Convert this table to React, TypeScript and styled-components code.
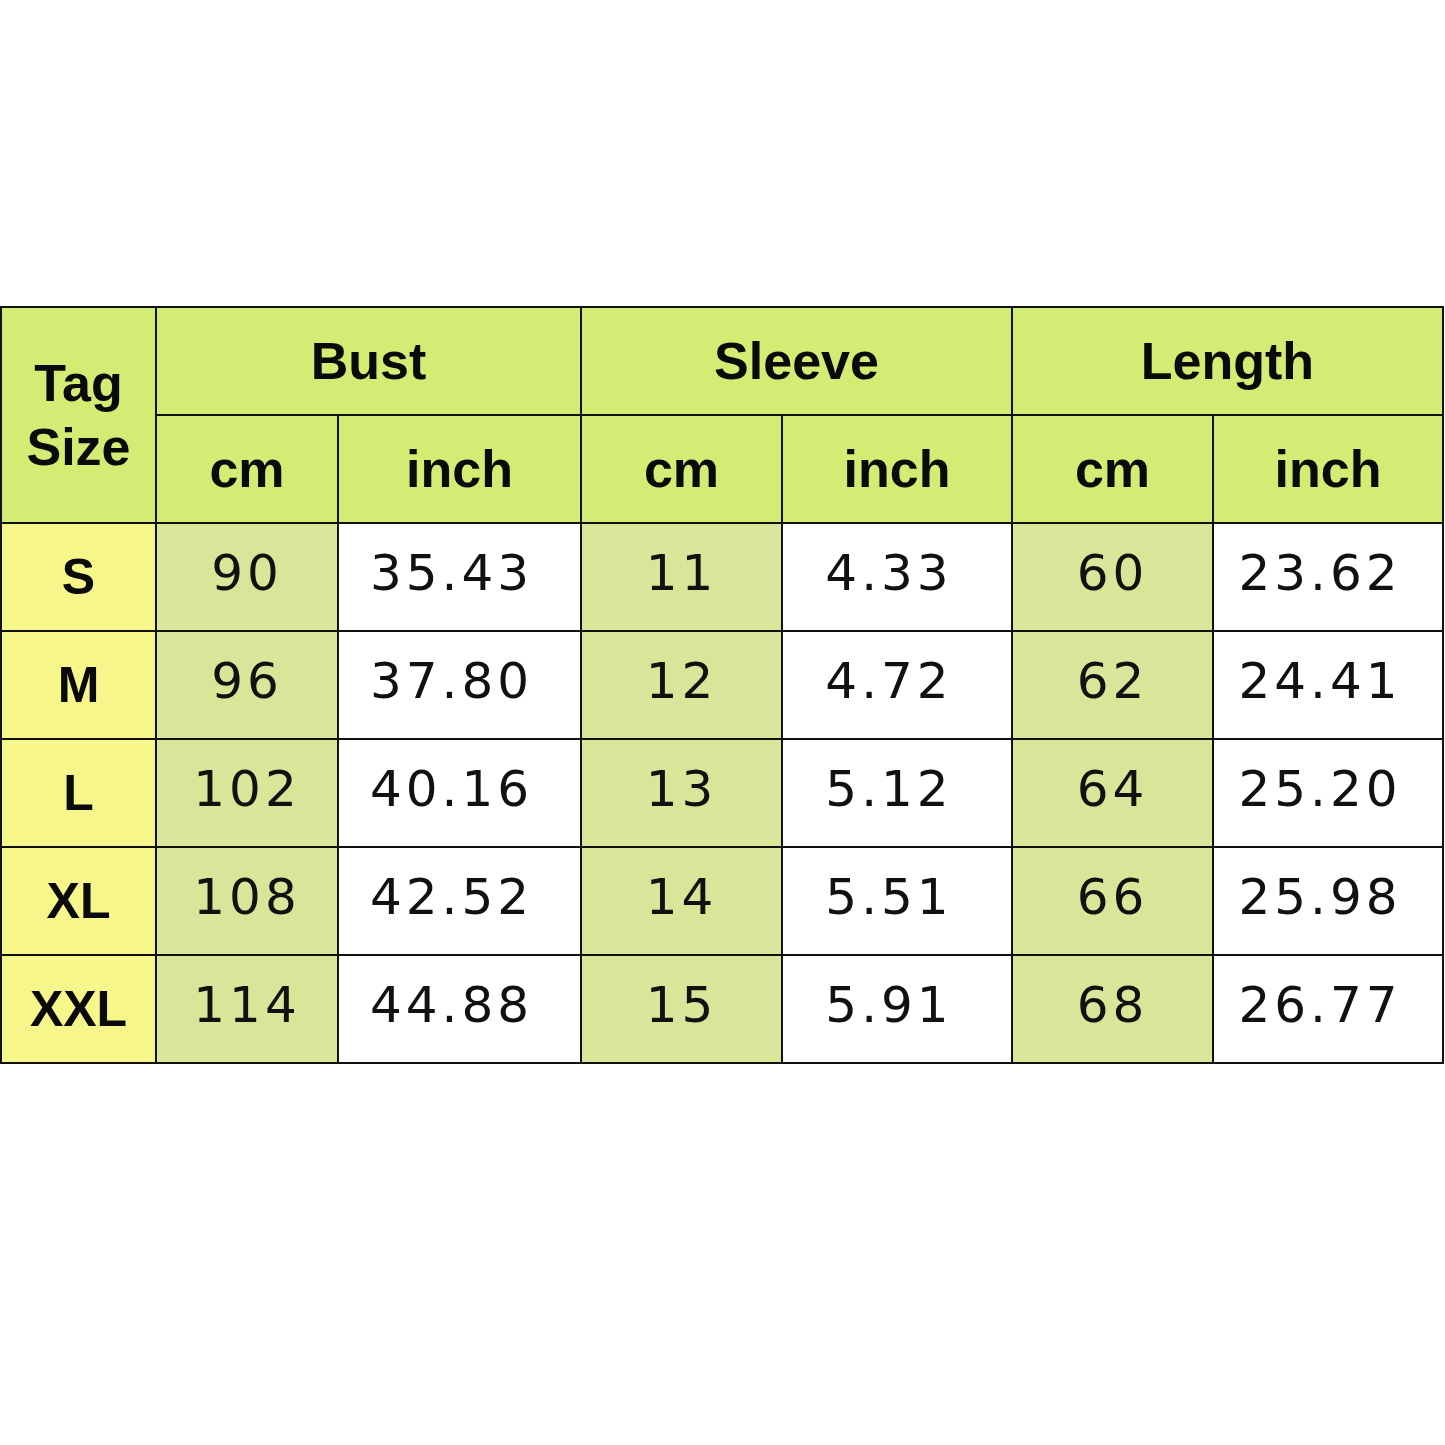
import React from 'react';
import styled, { createGlobalStyle } from 'styled-components';

const GlobalStyle = createGlobalStyle`
  html, body {
    margin: 0;
    padding: 0;
    background: #fff;
  }
`;

const Page = styled.div`
  width: 1445px;
  height: 1445px;
  padding-top: 306px;
  box-sizing: border-box;
  background: #fff;
`;

const Table = styled.div`
  display: grid;
  grid-template-columns: 153px 180px 241px 199px 228px 199px 228px;
  grid-template-rows: repeat(7, 106px);
  gap: 2px;
  padding: 2px;
  width: 1444px;
  box-sizing: border-box;
  background: #111;
`;

const Cell = styled.div<{ $bg: string; $span?: number; $rows?: number; $shift?: number }>`
  display: flex;
  align-items: center;
  justify-content: center;
  padding-right: ${p => p.$shift || 0}px;
  background: ${p => p.$bg};
  grid-column: span ${p => p.$span || 1};
  grid-row: span ${p => p.$rows || 1};
`;

const Head = styled.span`
  font-family: 'Liberation Sans', Arial, sans-serif;
  font-weight: bold;
  font-size: 52px;
  color: #0a0a0a;
  text-align: center;
  line-height: 64px;
`;

const SizeLabel = styled.span`
  font-family: 'Liberation Sans', Arial, sans-serif;
  font-weight: bold;
  font-size: 50px;
  color: #0a0a0a;
`;

const Num = styled.span`
  font-family: 'DejaVu Sans', sans-serif;
  font-size: 50px;
  letter-spacing: 4px;
  color: #111;
  margin-bottom: 8px;
`;

const GREEN = '#d3ec74';
const YELLOW = '#f7f68b';
const PALE = '#d7e698';

const rows = [
  ['S', '90', '35.43', '11', '4.33', '60', '23.62'],
  ['M', '96', '37.80', '12', '4.72', '62', '24.41'],
  ['L', '102', '40.16', '13', '5.12', '64', '25.20'],
  ['XL', '108', '42.52', '14', '5.51', '66', '25.98'],
  ['XXL', '114', '44.88', '15', '5.91', '68', '26.77'],
];

export default function App() {
  return (
    <Page>
      <GlobalStyle />
      <Table>
        <Cell $bg={GREEN} $rows={2}>
          <Head>
            Tag
            <br />
            Size
          </Head>
        </Cell>
        <Cell $bg={GREEN} $span={2}>
          <Head>Bust</Head>
        </Cell>
        <Cell $bg={GREEN} $span={2}>
          <Head>Sleeve</Head>
        </Cell>
        <Cell $bg={GREEN} $span={2}>
          <Head>Length</Head>
        </Cell>
        {['cm', 'inch', 'cm', 'inch', 'cm', 'inch'].map((u, i) => (
          <Cell key={i} $bg={GREEN}>
            <Head>{u}</Head>
          </Cell>
        ))}
        {rows.map(r => (
          <React.Fragment key={r[0]}>
            <Cell $bg={YELLOW}>
              <SizeLabel>{r[0]}</SizeLabel>
            </Cell>
            {r.slice(1).map((v, i) => (
              <Cell key={i} $bg={i % 2 === 0 ? PALE : '#fff'} $shift={i % 2 === 0 ? 0 : 16}>
                <Num>{v}</Num>
              </Cell>
            ))}
          </React.Fragment>
        ))}
      </Table>
    </Page>
  );
}
